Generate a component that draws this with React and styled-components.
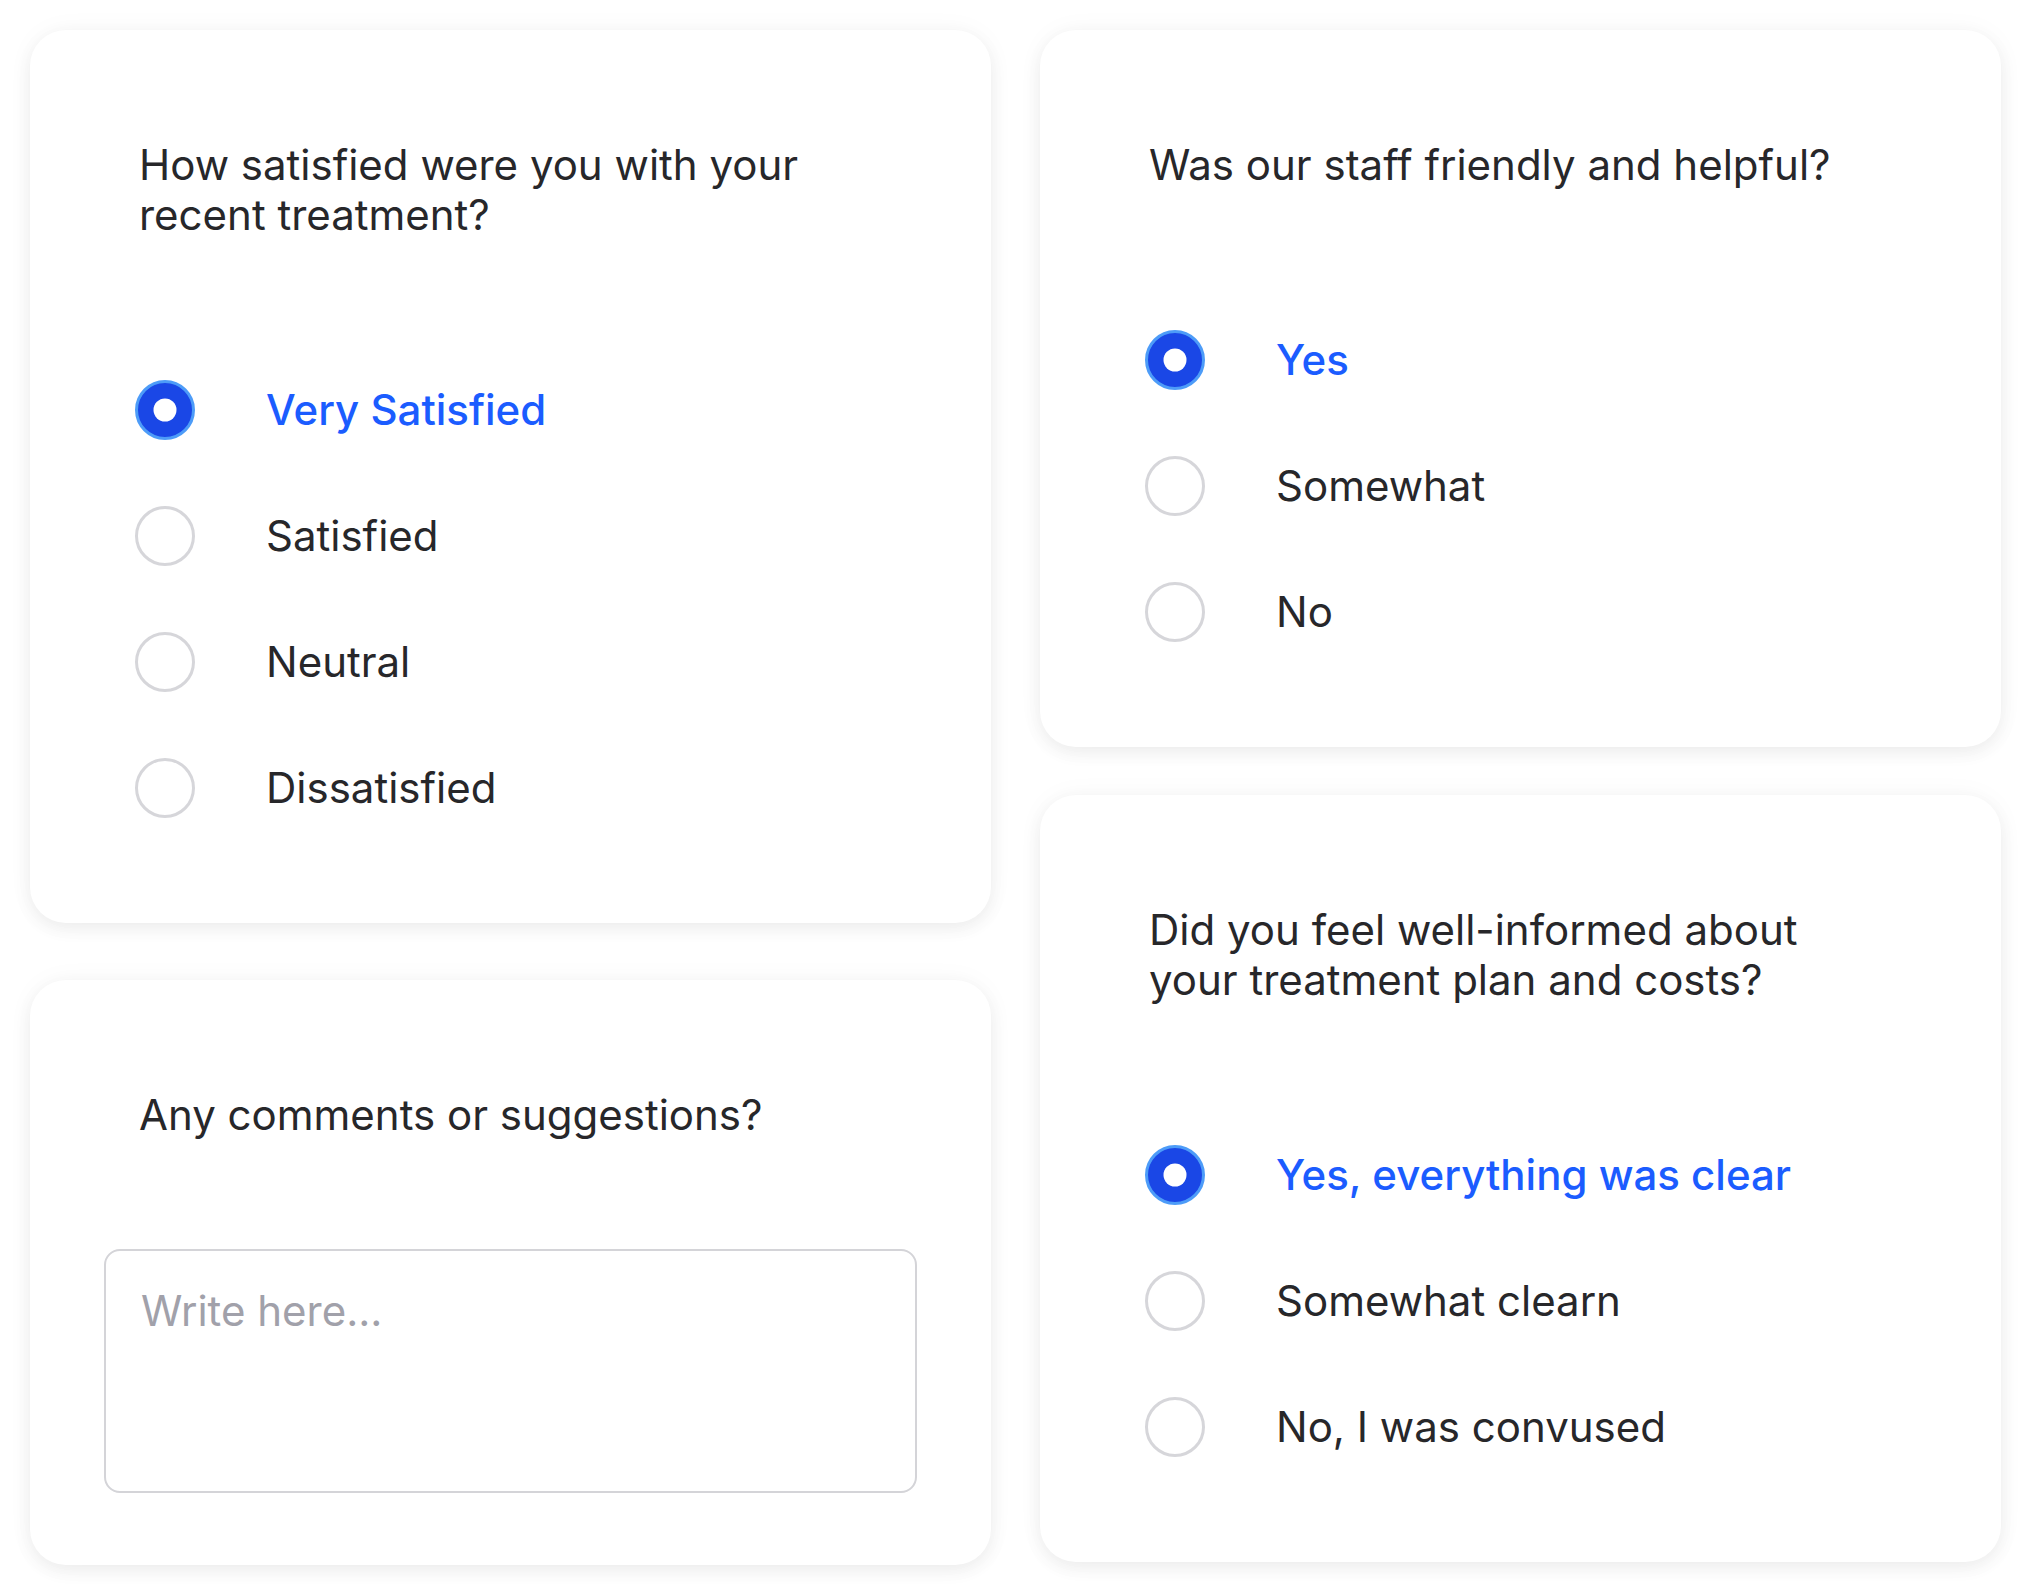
import React from 'react';
import styled, { createGlobalStyle } from 'styled-components';

const GlobalStyle = createGlobalStyle`
    *{ box-sizing:border-box; }
    body{
        margin:0;
        background:#ffffff;
        font-family: Inter, "Noto Sans", sans-serif;
        color:#27272a;
    }
`

const Page = styled.div`
    width:2031px;
    padding:30px;
    display:grid;
    grid-template-columns: 961px 961px;
    column-gap:49px;
    align-items:start;
`

const Column = styled.div`
    display:flex;
    flex-direction:column;
    gap:${props => props.gap}px;
`

const Card = styled.div`
    background:#ffffff;
    border-radius:36px;
    padding:110px 74px ${props => props.bottom}px;
    box-shadow: 0 6px 18px rgba(0,0,0,0.06), 0 0 28px rgba(0,0,0,0.035);
`

const Question = styled.h2`
    margin:0 0 ${props => props.space}px;
    padding-left:35px;
    font-size:42px;
    line-height:50px;
    font-weight:400;
    color:#27272a;
    max-width:${props => props.wrap ? '740px' : 'none'};
`

const Options = styled.div`
    display:flex;
    flex-direction:column;
    gap:66px;
    padding-left:31px;
`

const Option = styled.label`
    display:flex;
    align-items:center;
    gap:71px;
    height:60px;
    cursor:pointer;
`

const Radio = styled.span`
    width:60px;
    height:60px;
    flex:none;
    border-radius:50%;
    position:relative;
    background:${props => props.checked ? '#1a47e6' : '#ffffff'};
    border:${props => props.checked ? '3px solid #4d9cf8' : '3px solid #d6d6da'};
    &::after{
        content:'';
        display:${props => props.checked ? 'block' : 'none'};
        position:absolute;
        width:23px;
        height:23px;
        border-radius:50%;
        background:#ffffff;
        top:50%;
        left:50%;
        transform:translate(-50%,-50%);
    }
`

const Label = styled.span`
    font-size:42px;
    line-height:50px;
    font-weight:${props => props.checked ? 500 : 400};
    color:${props => props.checked ? '#1b5cff' : '#27272a'};
`

const TextBox = styled.textarea`
    display:block;
    width:100%;
    height:244px;
    margin:0;
    padding:35px;
    border:2px solid #d4d4d8;
    border-radius:16px;
    resize:none;
    outline:none;
    font-family: Inter, "Noto Sans", sans-serif;
    font-size:42px;
    line-height:50px;
    color:#27272a;
    &::placeholder{
        color:#a1a1aa;
    }
`

const RadioQuestion = ({question, options, selected, wrap}) => {
    return (
        <Card bottom={105}>
            <Question space={140} wrap={wrap}>{question}</Question>
            <Options>
                {options.map(o => (
                    <Option key={o}>
                        <Radio checked={o === selected}/>
                        <Label checked={o === selected}>{o}</Label>
                    </Option>
                ))}
            </Options>
        </Card>
    )
}

const App = () => {
    return (
        <>
            <GlobalStyle/>
            <Page>
                <Column gap={57}>
                    <RadioQuestion
                        wrap
                        question="How satisfied were you with your recent treatment?"
                        options={['Very Satisfied','Satisfied','Neutral','Dissatisfied']}
                        selected="Very Satisfied"
                    />
                    <Card bottom={72}>
                        <Question space={109}>Any comments or suggestions?</Question>
                        <TextBox placeholder="Write here..."/>
                    </Card>
                </Column>
                <Column gap={48}>
                    <RadioQuestion
                        question="Was our staff friendly and helpful?"
                        options={['Yes','Somewhat','No']}
                        selected="Yes"
                    />
                    <RadioQuestion
                        wrap
                        question="Did you feel well-informed about your treatment plan and costs?"
                        options={['Yes, everything was clear','Somewhat clearn','No, I was convused']}
                        selected="Yes, everything was clear"
                    />
                </Column>
            </Page>
        </>
    )
}

export default App;
